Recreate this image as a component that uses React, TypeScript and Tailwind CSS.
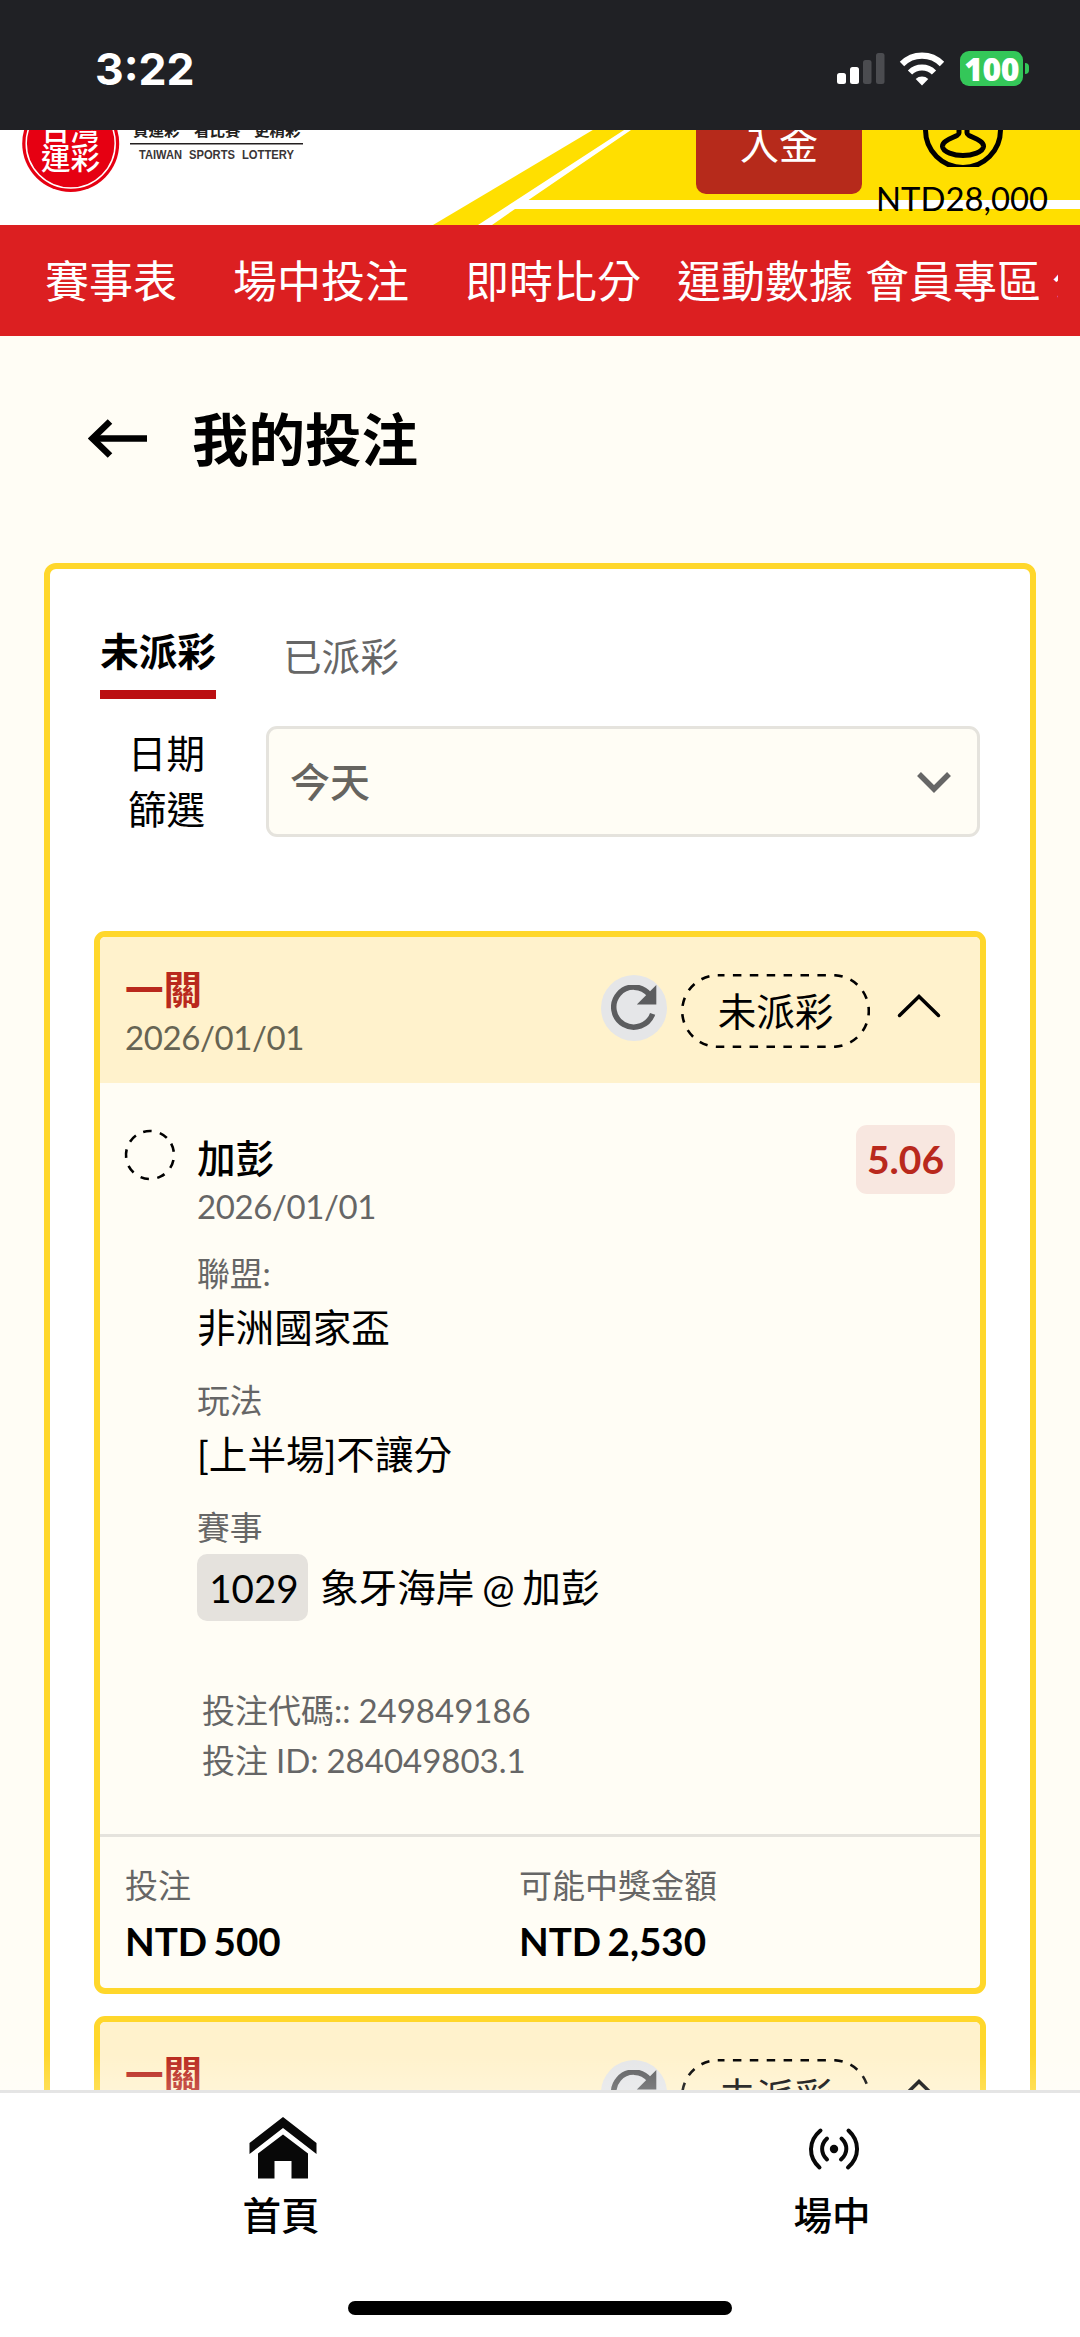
const navItems = [
  { label: "賽事表", className: "ml-[45px]" },
  { label: "場中投注", className: "ml-[56px]" },
  { label: "即時比分", className: "ml-[56px]" },
  { label: "運動數據", className: "ml-[36px]" },
  { label: "會員專區", className: "ml-[12px]" },
  { label: "公告", className: "ml-[11px]" },
];

const bets = [
  {
    id: "284049803.1",
    code: "249849186",
    title: "一關",
    date: "2026/01/01",
    status: "未派彩",
    pick: "加彭",
    odds: "5.06",
    league: "非洲國家盃",
    market: "[上半場]不讓分",
    eventNo: "1029",
    event: "象牙海岸 @ 加彭",
    stake: "NTD 500",
    payout: "NTD 2,530",
  },
  {
    id: "284049802.1",
    code: "249849185",
    title: "一關",
    date: "2026/01/01",
    status: "未派彩",
    pick: "加彭",
    odds: "5.06",
    league: "非洲國家盃",
    market: "[上半場]不讓分",
    eventNo: "1029",
    event: "象牙海岸 @ 加彭",
    stake: "NTD 500",
    payout: "NTD 2,530",
  },
];

type Bet = (typeof bets)[number];

function StatusBar() {
  return (
    <div className="flex h-[130px] shrink-0 items-center justify-between bg-[#202125] pt-[7px] pr-[51px] pl-[95px]">
      <span className="font-['Inter'] text-[44.5px] leading-[44px] font-bold text-white">3:22</span>
      <div className="flex items-center">
        <svg className="h-[31px] w-[48px]" viewBox="0 0 48 31">
          <rect x="0" y="20" width="9" height="11" rx="2.5" fill="#fff" />
          <rect x="13" y="14" width="9" height="17" rx="2.5" fill="#fff" />
          <rect x="26" y="7" width="8.500" height="24" rx="2.500" fill="#4b4c50" />
          <rect x="39" y="0" width="8.500" height="31" rx="2.500" fill="#4b4c50" />
        </svg>
        <svg className="ml-[14px] h-[34px] w-[46px]" viewBox="0 0 46 34">
          <path d="M3 12 A28 28 0 0 1 43 12" fill="none" stroke="#fff" strokeWidth="6.200" />
          <path d="M11 20.500 A17 17 0 0 1 35 20.500" fill="none" stroke="#fff" strokeWidth="6" />
          <path d="M16.700 27 A9.500 9.500 0 0 1 29.300 27 L23 33.500 Z" fill="#fff" />
        </svg>
        <div className="ml-[15px] flex h-[35px] w-[63px] items-center justify-center rounded-[9px] bg-[#34c759] font-['Open_Sans'] text-[32px] leading-[35px] font-extrabold tracking-[-0.5px] text-white">
          100
        </div>
        <div className="ml-[2px] h-[11px] w-[4px] rounded-r-full bg-[#34c759]" />
      </div>
    </div>
  );
}

function SiteHeader() {
  return (
    <header className="h-[95px] shrink-0 overflow-hidden bg-white">
      <div className="relative -mt-[65px] flex h-[160px]">
        <svg className="absolute inset-0 h-[160px] w-[1080px]" viewBox="0 65 1080 160">
          <path d="M702 65 H1080 V225 H433 Z" fill="#ffdf00" />
          <path d="M724 65 L478 225 H492 L515 209 H1080 V200 H528.500 L631 130 L726 65 Z" fill="#fff" />
        </svg>

        <svg className="relative h-[160px] w-[320px]" viewBox="0 65 320 160">
          <circle cx="70.700" cy="143.500" r="48.500" fill="#e60012" />
          <circle cx="70.700" cy="143.500" r="44.500" fill="none" stroke="#fff" strokeWidth="1.500" />
          <g className="font-['Noto_Sans_CJK_TC',sans-serif] font-medium" fill="#fff" fontSize="29.500">
            <text x="41" y="139.500">台灣</text>
            <text x="41" y="169">運彩</text>
          </g>
          <g className="font-['Noto_Sans_CJK_TC',sans-serif] font-bold" fill="#231f20" fontSize="15.500">
            <text x="133" y="136">買運彩</text>
            <text x="194" y="136">看比賽</text>
            <text x="254" y="136">更精彩</text>
          </g>
          <rect x="130" y="143" width="173" height="1.500" fill="#231f20" />
          <g className="font-['Liberation_Sans',sans-serif] font-bold" fill="#3a3536" fontSize="12.500">
            <text x="139" y="159" textLength="43" lengthAdjust="spacingAndGlyphs">TAIWAN</text>
            <text x="189" y="159" textLength="46" lengthAdjust="spacingAndGlyphs">SPORTS</text>
            <text x="242" y="159" textLength="52" lengthAdjust="spacingAndGlyphs">LOTTERY</text>
          </g>
        </svg>

        <button className="relative ml-[376px] flex h-[129px] w-[166px] items-end justify-center rounded-[10px] bg-[#b62a1b] pb-[26px] text-[39px] leading-[48px] text-white">
          入金
        </button>

        <div className="relative ml-[13px] flex w-[174px] flex-col items-center">
          <svg className="h-[102px] w-[84px] shrink-0" viewBox="0 65 84 102">
            <circle cx="43" cy="130" r="37.500" fill="none" stroke="#000" strokeWidth="5" />
            <path
              d="M38 129 V133 C38 137 21 139 21.500 146.500 C22 152 33 155.500 42 155.500 C51 155.500 62 152 62.500 146.500 C63 139 46 137 46 133 V129"
              transform="translate(1 0)"
              fill="none"
              stroke="#000"
              strokeWidth="5"
            />
          </svg>
          <span className="mt-[12px] text-[32.8px] leading-[40px] text-black">NTD28,000</span>
        </div>
      </div>
    </header>
  );
}

function NavBar() {
  return (
    <nav className="h-[111px] shrink-0 bg-[#dc1f21] pr-[22px]">
      <div className="flex h-full items-center overflow-hidden">
        {navItems.map((item) => (
          <a
            key={item.label}
            className={`shrink-0 text-[44px] leading-[60px] whitespace-nowrap text-white ${item.className}`}
          >
            {item.label}
          </a>
        ))}
      </div>
    </nav>
  );
}

function Field({ label, value }: { label: string; value: string }) {
  return (
    <div className="mb-[20px]">
      <p className="text-[32.8px] leading-[54px] text-[#666]">{label}</p>
      <p className="text-[38.6px] leading-[53px]">{value}</p>
    </div>
  );
}

function BetCard({ bet }: { bet: Bet }) {
  return (
    <article className="overflow-hidden rounded-[11px] border-[6px] border-[#ffd72b] bg-[#fffdf5]">
      <div className="flex h-[146px] bg-[#fff2cc] pt-[28px] pl-[25px]">
        <div className="w-[476px]">
          <h2 className="text-[38.6px] leading-[48px] font-bold text-[#b9291d]">{bet.title}</h2>
          <p className="mt-px text-[33px] leading-[47px] tracking-[-0.4px] text-[#666453]">{bet.date}</p>
        </div>
        <button className="mt-[10px] flex size-[66px] items-center justify-center rounded-full bg-[#e5e6e8]">
          <svg className="h-[46px] w-[46px]" viewBox="0 0 46 46">
            <path d="M38.500 9.800 A20 20 0 1 0 41.600 28.800" fill="none" stroke="#5c5d5f" strokeWidth="5.500" />
            <path d="M45.300 0 V19.500 H25.800 Z" fill="#5c5d5f" />
          </svg>
        </button>
        <div className="relative mt-[9px] ml-[14px] flex h-[74px] w-[189px] items-center justify-center text-[38.6px] leading-[48px]">
          <svg className="absolute inset-0 h-[74px] w-[189px]" viewBox="0 0 189 74">
            <rect
              x="1.200"
              y="1.200"
              width="186.600"
              height="71.600"
              rx="35.800"
              fill="none"
              stroke="#000"
              strokeWidth="2.600"
              strokeDasharray="8.500 8.400"
              strokeDashoffset="2"
            />
          </svg>
          {bet.status}
        </div>
        <svg className="mt-[28px] ml-[27px] h-[26px] w-[44px]" viewBox="0 0 44 26">
          <path d="M2.500 22.500 L22 3.500 L41.500 22.500" fill="none" stroke="#000" strokeWidth="3.500" strokeLinecap="round" />
        </svg>
      </div>

      <div className="flex h-[751px] pt-[42px] pl-[24px]">
        <svg className="mt-[4px] size-[52px] shrink-0" viewBox="0 0 52 52">
          <circle
            cx="26"
            cy="26"
            r="24"
            fill="none"
            stroke="#000"
            strokeWidth="2.600"
            strokeDasharray="8.400 8.355"
            transform="rotate(-28 26 26)"
          />
        </svg>
        <div className="ml-[21px] flex-1">
          <div className="flex justify-between">
            <div className="mt-[9px]">
              <h3 className="text-[38.6px] leading-[48px] font-medium">{bet.pick}</h3>
              <p className="text-[33px] leading-[48px] tracking-[-0.4px] text-[#666]">{bet.date}</p>
            </div>
            <span className="mr-[25px] flex h-[69px] w-[99px] items-center justify-center rounded-[11px] bg-[#f8e7e0] text-[39px] font-bold text-[#b9291d]">
              {bet.odds}
            </span>
          </div>
          <div className="mt-[17px]">
            <Field label="聯盟:" value={bet.league} />
            <Field label="玩法" value={bet.market} />
            <p className="text-[32.8px] leading-[54px] text-[#666]">賽事</p>
            <div className="-mt-px flex items-center text-[38.6px] leading-[53px]">
              <span className="flex h-[67px] w-[111px] items-center justify-center rounded-[10px] bg-[#e5e2dd] pt-px pl-[3px]">
                {bet.eventNo}
              </span>
              <span className="ml-[12px] [word-spacing:-2px]">{bet.event}</span>
            </div>
          </div>
          <div className="mt-[64px] pl-[5px] text-[33px] leading-[50px] [word-spacing:-0.5px] text-[#666]">
            <p>投注代碼:: {bet.code}</p>
            <p>投注 ID: {bet.id}</p>
          </div>
        </div>
      </div>

      <div className="flex h-[154px] border-t-[3px] border-[#e5e3dd] pt-[21px] pl-[25px]">
        <div className="w-[394px]">
          <p className="text-[33px] leading-[55px] text-[#666]">投注</p>
          <p className="mt-px text-[38.6px] leading-[55px] font-bold [word-spacing:-3px]">{bet.stake}</p>
        </div>
        <div>
          <p className="text-[33px] leading-[55px] text-[#666]">可能中獎金額</p>
          <p className="mt-px text-[38.6px] leading-[55px] font-bold [word-spacing:-3px]">{bet.payout}</p>
        </div>
      </div>
    </article>
  );
}

function BottomBar() {
  return (
    <footer className="flex h-[247px] shrink-0 flex-col border-t-[3px] border-[#e5e5e5] bg-white">
      <div className="flex h-[208px]">
        <a className="ml-[183px] flex w-[200px] flex-col items-center">
          <svg className="mt-[24px] h-[62px] w-[68px]" viewBox="0 0 68 62">
            <path d="M34 0 L67.500 26 V37 L34 11 L0.500 37 V26 Z" fill="#080808" />
            <path d="M34 17.500 L59 36.500 V61.500 H42.500 V44 H25.500 V61.500 H9 V36.500 Z" fill="#080808" />
          </svg>
          <span className="mt-[11px] -ml-[4px] text-[38.6px] leading-[50px] font-medium">首頁</span>
        </a>
        <a className="ml-[351px] flex w-[200px] flex-col items-center">
          <svg className="mt-[34px] h-[44px] w-[54px]" viewBox="0 0 54 44">
            <circle cx="27" cy="22" r="4.200" fill="#080808" />
            <g fill="none" stroke="#080808" strokeWidth="4" strokeLinecap="round">
              <path d="M20 11.500 C13.500 17.500 13.500 26.500 20 32.500" />
              <path d="M34.500 11.500 C41 17.500 41 26.500 34 32.500" />
              <path d="M13.500 3.500 C1 14 1 30 12.500 40.500" />
              <path d="M41.500 3.500 C53 14 53 30 41 40.500" />
            </g>
          </svg>
          <span className="mt-[19px] -ml-[4px] text-[38.6px] leading-[50px] font-medium">場中</span>
        </a>
      </div>
      <div className="mx-auto h-[14px] w-[384px] rounded-full bg-black" />
    </footer>
  );
}

export default function App() {
  return (
    <div className="flex h-[2337px] w-[1080px] flex-col overflow-hidden bg-[#fffdf5] font-['Lato','Noto_Sans_CJK_TC',sans-serif] text-black">
      <StatusBar />
      <SiteHeader />
      <NavBar />

      <main className="relative min-h-0 flex-1 overflow-hidden">
        <div className="flex h-[206px] items-center">
          <svg className="ml-[88px] h-[40px] w-[60px]" viewBox="0 0 60 40">
            <path d="M59 19.500 H4" fill="none" stroke="#000" strokeWidth="6.500" />
            <path d="M22 2.500 L4.500 19.500 L22 36.500" fill="none" stroke="#000" strokeWidth="6.500" />
          </svg>
          <h1 className="ml-[44px] text-[56.5px] leading-[70px] font-bold">我的投注</h1>
        </div>

        <section className="mx-[44px] mt-[21px] h-[1800px] rounded-[12px] border-[6px] border-[#ffd72b] bg-white px-[44px] pt-[58px]">
          <div className="flex pl-[6px] text-[38.6px] leading-[48px]">
            <button className="h-[72px] w-[116px] border-b-[9px] border-[#bb0f12] pb-[15px] font-bold">未派彩</button>
            <button className="mt-[5px] ml-[67px] h-[48px] text-[#666]">已派彩</button>
          </div>

          <div className="mt-[27px] flex h-[111px]">
            <label className="-mt-px ml-[33px] w-[78px] text-right text-[38.6px] leading-[56px]">
              日期
              <br />
              篩選
            </label>
            <div className="ml-[61px] flex w-[714px] items-center justify-between rounded-[11px] border-[3px] border-[#e5e3dd] bg-[#fffdf5] pr-[25px] pl-[21px]">
              <span className="text-[40px] leading-[50px] font-medium text-[#66645f]">今天</span>
              <svg className="h-[22px] w-[36px]" viewBox="0 0 36 22">
                <path d="M3 3 L18 18 L33 3" fill="none" stroke="#666" strokeWidth="5.500" />
              </svg>
            </div>
          </div>

          <div className="mt-[94px] flex flex-col gap-[22px]">
            {bets.map((bet) => (
              <BetCard key={bet.id} bet={bet} />
            ))}
          </div>
        </section>

        {/* soft fade above the bottom bar */}
        <div className="absolute inset-x-0 bottom-0 h-[36px] bg-linear-to-b from-white/0 to-white/20" />
      </main>

      <BottomBar />
    </div>
  );
}
